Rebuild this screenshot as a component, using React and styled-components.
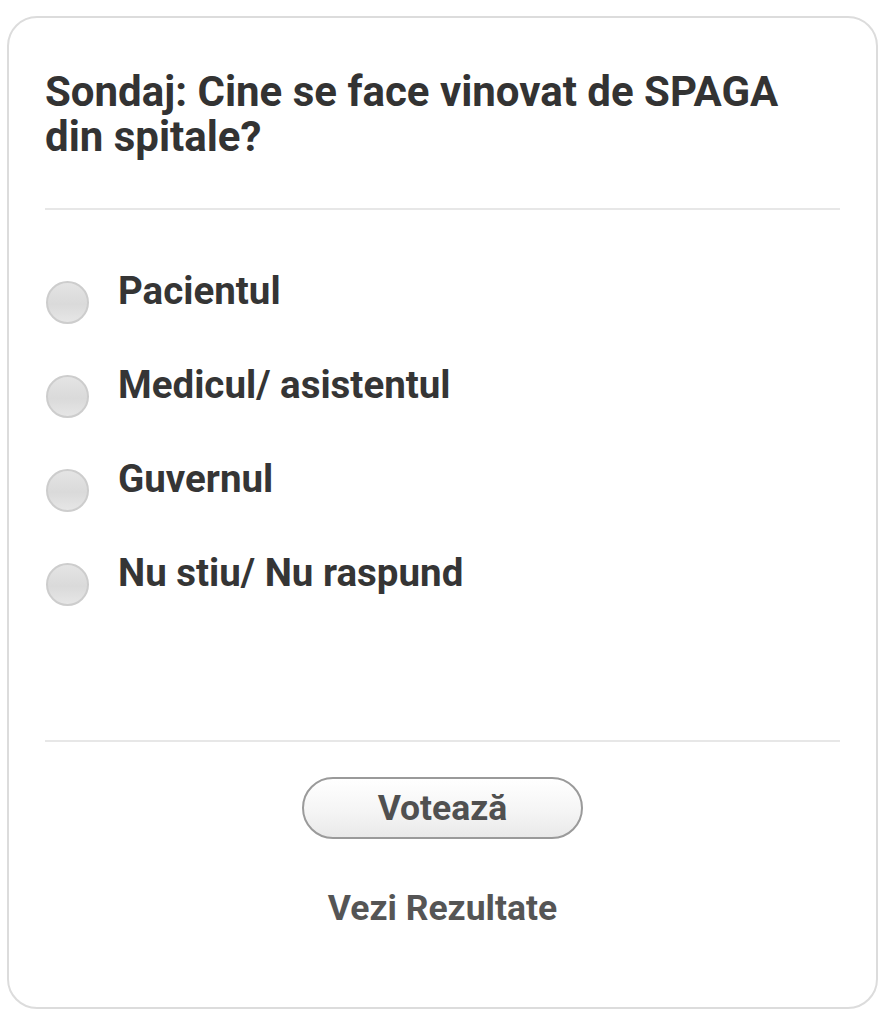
import React from 'react';
import styled, { createGlobalStyle } from 'styled-components';

const GlobalStyle = createGlobalStyle`
  html, body {
    margin: 0;
    padding: 0;
    background: #ffffff;
  }
  body {
    font-family: Roboto, "Liberation Sans", Arial, sans-serif;
  }
`;

const Page = styled.div`
  padding: 16px 7px 15px 7px;
`;

const PollCard = styled.div`
  box-sizing: border-box;
  height: 993px;
  border: 2px solid #dcdcdc;
  border-radius: 30px;
  padding: 51px 36px 0 36px;
  display: flex;
  flex-direction: column;
`;

const Question = styled.h2`
  margin: 0;
  font-size: 42px;
  line-height: 45px;
  font-weight: 700;
  color: #333333;
`;

const Divider = styled.hr`
  margin: ${(p) => p.$top}px 0 0 0;
  border: 0;
  height: 2px;
  flex: none;
  background: #e7e7e7;
`;

const Options = styled.div`
  display: flex;
  flex-direction: column;
  gap: 39px;
  padding-top: 59px;
  height: 530px;
  box-sizing: border-box;
`;

const OptionRow = styled.label`
  display: flex;
  align-items: flex-start;
  gap: 29px;
  cursor: pointer;
`;

const RadioCircle = styled.span`
  flex: none;
  box-sizing: border-box;
  width: 43px;
  height: 43px;
  margin-top: 12px;
  margin-left: 1px;
  border-radius: 50%;
  border: 2px solid #cdcdcd;
  background: linear-gradient(180deg, #e4e4e4 0%, #dadada 55%, #e6e6e6 100%);
`;

const OptionLabel = styled.span`
  font-size: 38.5px;
  line-height: 44px;
  font-weight: 700;
  color: #353535;
`;

const Actions = styled.div`
  display: flex;
  flex-direction: column;
  align-items: center;
  padding-top: 35px;
`;

const VoteButton = styled.button`
  box-sizing: border-box;
  width: 281px;
  height: 62px;
  border-radius: 31px;
  border: 2px solid #9a9a9a;
  background: linear-gradient(180deg, #ffffff 0%, #f4f4f4 60%, #e9e9e9 100%);
  font-family: inherit;
  font-size: 35.5px;
  font-weight: 700;
  color: #505050;
  padding: 0;
  cursor: pointer;
`;

const ResultsLink = styled.a`
  margin-top: 48px;
  font-size: 35.5px;
  line-height: 42px;
  font-weight: 700;
  color: #555555;
  text-decoration: none;
  cursor: pointer;
`;

const options = ['Pacientul', 'Medicul/ asistentul', 'Guvernul', 'Nu stiu/ Nu raspund'];

function App() {
  return (
    <>
      <GlobalStyle />
      <Page>
        <PollCard>
          <Question>
            Sondaj: Cine se face vinovat de SPAGA
            <br />
            din spitale?
          </Question>
          <Divider $top={49} />
          <Options>
            {options.map((text) => (
              <OptionRow key={text}>
                <RadioCircle />
                <OptionLabel>{text}</OptionLabel>
              </OptionRow>
            ))}
          </Options>
          <Divider $top={0} />
          <Actions>
            <VoteButton>Votează</VoteButton>
            <ResultsLink>Vezi Rezultate</ResultsLink>
          </Actions>
        </PollCard>
      </Page>
    </>
  );
}

export default App;
